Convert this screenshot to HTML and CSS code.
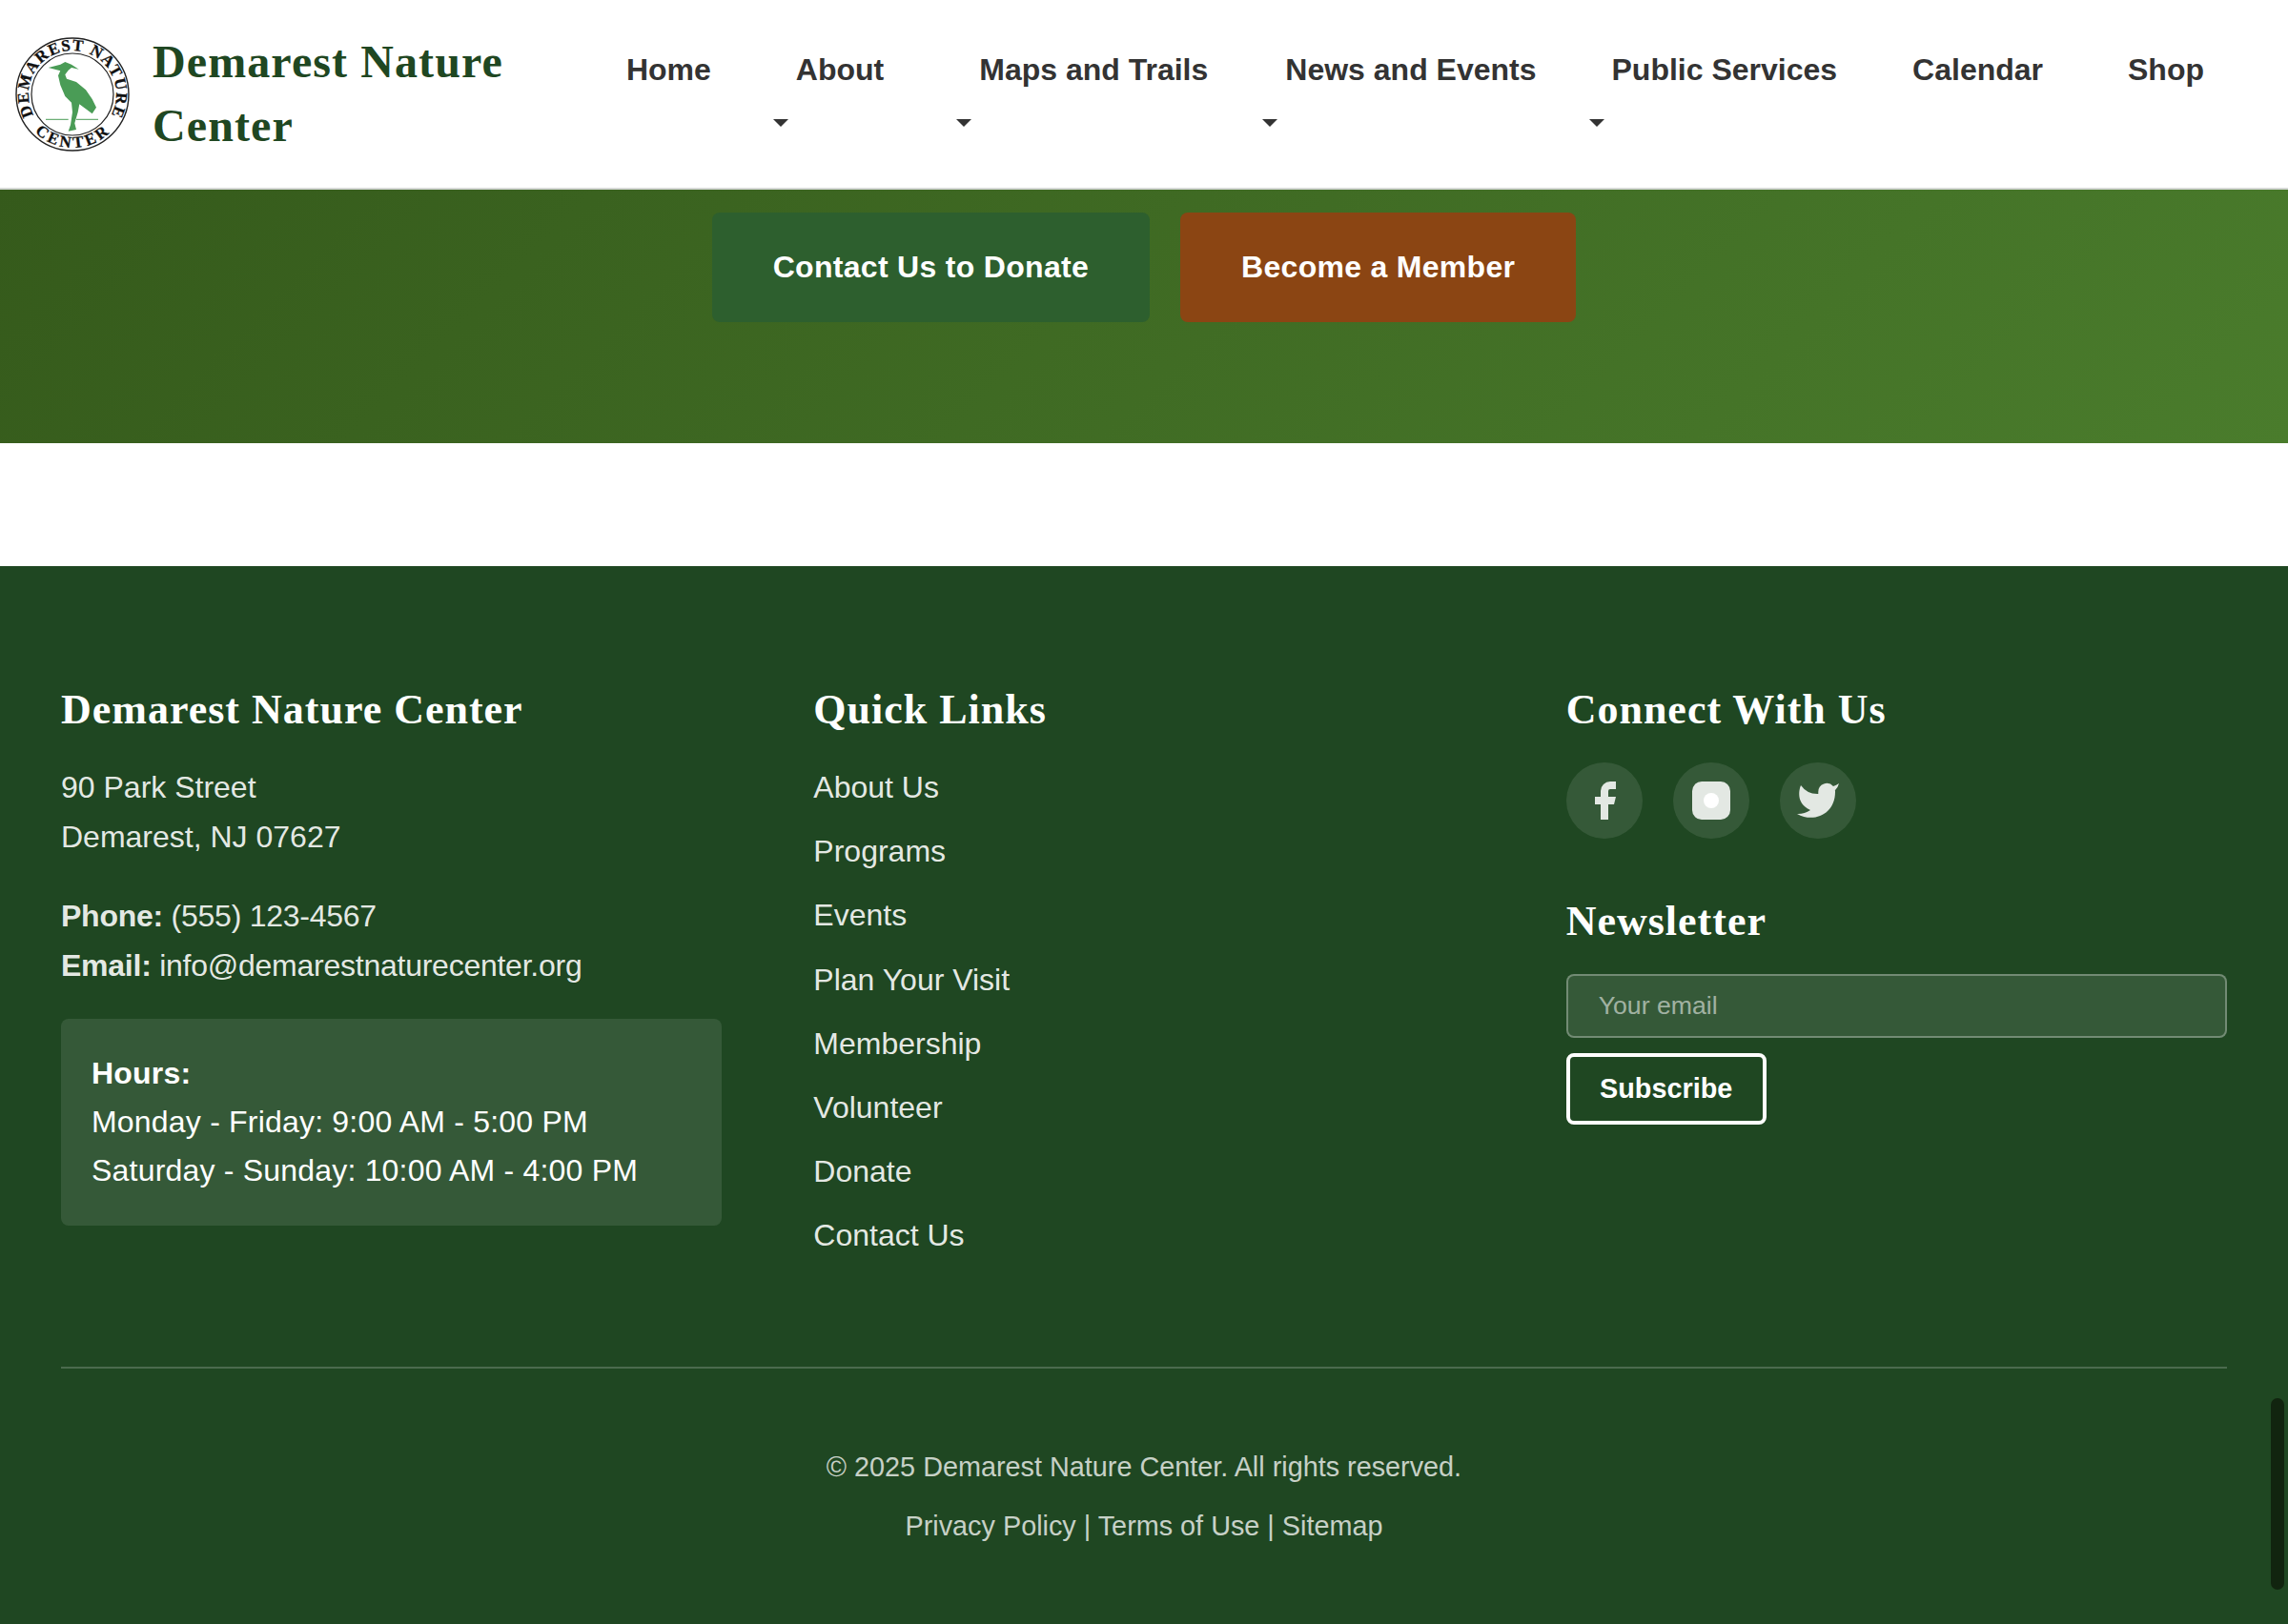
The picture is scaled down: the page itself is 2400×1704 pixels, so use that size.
FILE: index.html
```html
<!DOCTYPE html>
<html lang="en">
<head>
<meta charset="utf-8">
<title>Demarest Nature Center</title>
<link rel="stylesheet" href="styles.css">
</head>
<body>
<header class="site-header">
  <a class="brand" href="#">
    <svg class="logo" viewBox="0 0 120 120" aria-label="Demarest Nature Center logo">
      <defs>
        <path id="arc-top" d="M19.4 81.6A46 46 0 1 1 100.6 81.6"/>
        <path id="arc-bottom" d="M20.4 99.6A56 56 0 0 0 99.6 99.6"/>
      </defs>
      <circle class="ring-outer" cx="60" cy="60" r="59"/>
      <circle class="ring-inner" cx="60" cy="60" r="43"/>
      <text class="logo-text"><textPath href="#arc-top" textLength="189" lengthAdjust="spacing">DEMAREST NATURE</textPath></text>
      <text class="logo-text"><textPath href="#arc-bottom" textLength="86" lengthAdjust="spacing">CENTER</textPath></text>
      <path class="heron" d="M34.7 32L47.3 28.7L52.3 26L59 28.7L66.7 33.7L59 32L55.7 34.7L52.3 39.3L54 43.7L64 47L74 55.3L80.7 65L85 73.7L80.7 80.3L74 75.3L67.3 70.3L65.7 78.7L62.3 90.3L64 97L55.7 98.7L58 92L60 78.7L59 68.7L52.3 62L47.3 50.3L45 40.3L47.3 35.3Z"/>
      <path class="water" d="M32 86.3H55.7M64 86.3H87"/>
    </svg>
    <span class="brand-name">Demarest Nature Center</span>
  </a>
  <nav class="main-nav">
    <a class="nav-link nav-home" href="#">Home</a>
    <a class="nav-link nav-about has-menu" href="#">About</a>
    <a class="nav-link nav-maps has-menu" href="#">Maps and Trails</a>
    <a class="nav-link nav-news has-menu" href="#">News and Events</a>
    <a class="nav-link nav-public has-menu" href="#">Public Services</a>
    <a class="nav-link nav-calendar" href="#">Calendar</a>
    <a class="nav-link" href="#">Shop</a>
  </nav>
</header>

<section class="cta">
  <a class="btn btn-green" href="#">Contact Us to Donate</a>
  <a class="btn btn-brown" href="#">Become a Member</a>
</section>

<div class="spacer"></div>

<footer class="site-footer">
  <div class="footer-grid">
    <div class="footer-col">
      <h3 class="footer-title">Demarest Nature Center</h3>
      <p class="footer-text">90 Park Street<br>Demarest, NJ 07627</p>
      <p class="footer-text contact"><strong>Phone:</strong> (555) 123-4567<br><strong>Email:</strong> info@demarestnaturecenter.org</p>
      <div class="hours">
        <strong>Hours:</strong><br>
        Monday - Friday: 9:00 AM - 5:00 PM<br>
        Saturday - Sunday: 10:00 AM - 4:00 PM
      </div>
    </div>
    <div class="footer-col">
      <h3 class="footer-title">Quick Links</h3>
      <ul class="quick-links">
        <li><a href="#">About Us</a></li>
        <li><a href="#">Programs</a></li>
        <li><a href="#">Events</a></li>
        <li><a href="#">Plan Your Visit</a></li>
        <li><a href="#">Membership</a></li>
        <li><a href="#">Volunteer</a></li>
        <li><a href="#">Donate</a></li>
        <li><a href="#">Contact Us</a></li>
      </ul>
    </div>
    <div class="footer-col">
      <h3 class="footer-title">Connect With Us</h3>
      <div class="socials">
        <a class="social" href="#" aria-label="Facebook"><svg viewBox="0 0 24 24"><path class="icon-fill" d="M18 2h-3a5 5 0 0 0-5 5v3H7v4h3v8h4v-8h3l1-4h-4V7a1 1 0 0 1 1-1h3z"/></svg></a>
        <a class="social" href="#" aria-label="Instagram"><svg viewBox="0 0 24 24"><rect class="icon-fill" x="2" y="2" width="20" height="20" rx="5"/><circle class="icon-dot" cx="12" cy="12" r="4"/></svg></a>
        <a class="social" href="#" aria-label="Twitter"><svg viewBox="0 0 24 24"><path class="icon-fill" d="M23 3a10.9 10.9 0 0 1-3 1.5 4.48 4.48 0 0 0-7.86 3v1A10.66 10.66 0 0 1 3 4s-4 9 5 13a11.64 11.64 0 0 1-7 2c9 5 20 0 20-11.5a4.5 4.5 0 0 0-.08-.83A7.72 7.72 0 0 0 23 3z"/></svg></a>
      </div>
      <h3 class="footer-title newsletter-title">Newsletter</h3>
      <form class="newsletter">
        <input class="email" type="email" placeholder="Your email">
        <button class="subscribe" type="button">Subscribe</button>
      </form>
    </div>
  </div>
  <div class="footer-bottom">
    <p class="copyright">© 2025 Demarest Nature Center. All rights reserved.</p>
    <p class="legal"><a href="#">Privacy Policy</a> | <a href="#">Terms of Use</a> | <a href="#">Sitemap</a></p>
  </div>
</footer>
<div class="scrollbar"></div>
</body>
</html>
```

FILE: styles.css
```css
* { box-sizing: border-box; }
html, body { margin: 0; padding: 0; }
body {
  width: 2400px;
  height: 1704px;
  overflow: hidden;
  position: relative;
  font-family: "Liberation Sans", Arial, sans-serif;
  font-size: 32px;
  line-height: 1.6;
  color: #333;
  background: #fff;
}
a { color: inherit; text-decoration: none; }

.site-header {
  height: 199px;
  display: flex;
  align-items: center;
  justify-content: space-between;
  padding: 0 88px 0 16px;
  background: #fff;
  border-bottom: 2px solid #d5d8d5;
}
.brand { display: flex; align-items: center; gap: 24px; width: 560px; }
.logo { width: 120px; height: 120px; flex: none; }
.ring-outer { fill: #fff; stroke: #222; stroke-width: 1.4; }
.ring-inner { fill: #fff; stroke: #222; stroke-width: 1.2; }
.logo-text {
  font-family: "Liberation Serif", serif;
  font-weight: 700;
  font-size: 17px;
  fill: #111;
  stroke: #111;
  stroke-width: .3;
}
.heron { fill: #4a9c56; }
.water { stroke: #4a9c56; stroke-width: 1; fill: none; }
.brand-name {
  font-family: "Liberation Serif", serif;
  font-weight: 700;
  font-size: 48px;
  letter-spacing: 1.1px;
  line-height: 67px;
  color: #1f4722;
  width: 420px;
  margin-bottom: 2px;
}

.main-nav { display: flex; align-items: center; gap: 82px; margin-bottom: 50px; }
.nav-link { position: relative; font-weight: 700; font-size: 32px; color: #333; white-space: nowrap; }
.nav-home { margin-right: 7px; }
.nav-about { margin-right: 18px; }
.nav-maps { margin-right: -1px; }
.nav-news { margin-right: -3px; }
.nav-public { margin-right: -3px; }
.nav-calendar { margin-right: 7px; }
.has-menu::after {
  content: "";
  position: absolute;
  left: -24px;
  top: 77px;
  border-left: 8px solid transparent;
  border-right: 8px solid transparent;
  border-top: 8px solid #333;
}

.cta {
  height: 266px;
  padding-top: 24px;
  display: flex;
  justify-content: center;
  align-items: flex-start;
  gap: 32px;
  background: linear-gradient(135deg, #355a1b 0%, #4a7c2c 100%);
}
.btn {
  display: block;
  padding: 32px 64px;
  height: 115px;
  border-radius: 8px;
  font-weight: 700;
  font-size: 32px;
  letter-spacing: .3px;
  color: #fff;
}
.btn-green { background: #2d5f2e; }
.btn-brown { background: #8b4513; }

.spacer { height: 129px; }

.site-footer {
  height: 1110px;
  padding: 110px 64px 0;
  background: #1f4722;
  color: rgba(255, 255, 255, .9);
}
.footer-grid { display: grid; grid-template-columns: repeat(3, 1fr); gap: 96px; height: 732px; border-bottom: 2px solid rgba(255, 255, 255, .2); }
.footer-title {
  margin: 0 0 14px;
  font-family: "Liberation Serif", serif;
  font-weight: 700;
  font-size: 44px;
  letter-spacing: 1px;
  line-height: 82px;
  color: #fff;
}
.footer-text { margin: 0 0 30.5px; line-height: 52px; }
.footer-text strong { font-weight: 700; }
.contact { letter-spacing: -.25px; }
.hours {
  padding: 32px;
  border-radius: 8px;
  background: rgba(255, 255, 255, .1);
  line-height: 51px;
  letter-spacing: .2px;
  color: #fff;
}
.hours strong { font-weight: 700; }
.quick-links { list-style: none; margin: 0; padding: 0; display: flex; flex-direction: column; gap: 15.2px; }
.quick-links li { line-height: 52px; }
.socials { display: flex; gap: 32px; margin-top: 6px; }
.social {
  width: 80px;
  height: 80px;
  border-radius: 50%;
  background: rgba(255, 255, 255, .1);
  display: flex;
  align-items: center;
  justify-content: center;
}
.social svg { width: 48px; height: 48px; }
.icon-fill { fill: #e3e8e3; }
.icon-dot { fill: #fff; }
.newsletter-title { margin: 46px 0 14px; }
.newsletter { display: flex; flex-direction: column; align-items: flex-start; gap: 16px; }
.email {
  width: 100%;
  height: 67px;
  padding: 0 32px;
  border: 2px solid rgba(255, 255, 255, .3);
  border-radius: 8px;
  background: rgba(255, 255, 255, .1);
  font-family: inherit;
  font-size: 26.67px;
  color: #fff;
}
.email::placeholder { color: rgba(255, 255, 255, .55); }
.subscribe {
  width: 210px;
  height: 75px;
  padding: 0;
  border: 4px solid #fff;
  border-radius: 8px;
  background: transparent;
  font-family: inherit;
  font-weight: 700;
  font-size: 28.8px;
  color: #fff;
}
.footer-bottom { text-align: center; padding-top: 79px; font-size: 28.8px; color: rgba(255, 255, 255, .75); }
.copyright, .legal { margin: 0; line-height: 48px; }
.legal { margin-top: 14px; }

.scrollbar {
  position: absolute;
  left: 2382px;
  top: 1467px;
  width: 14px;
  height: 201px;
  border-radius: 7px;
  background: #11240f;
}
```
